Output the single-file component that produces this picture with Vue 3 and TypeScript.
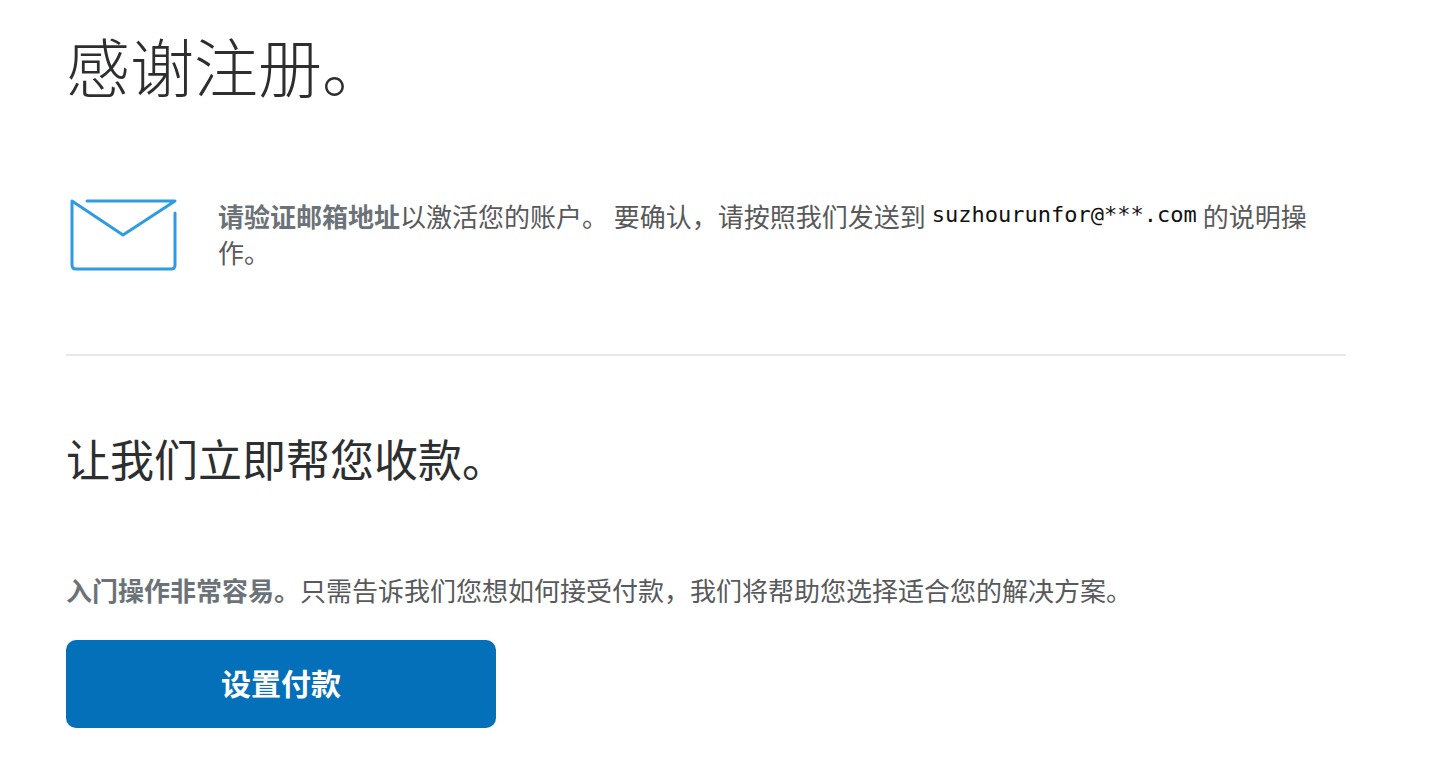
<script setup lang="ts">
const email: string = 'suzhourunfor@***.com'
</script>

<template>
  <main class="page">
    <h1 class="title">感谢注册。</h1>
    <section class="verify">
      <svg class="envelope" viewBox="0 0 108 76" aria-hidden="true">
        <path d="M17 4H105L53 38L2 4V68Q2 72 6 72H101Q105 72 105 68V16" />
      </svg>
      <p class="copy">
        <strong>请验证邮箱地址</strong>以激活您的账户。 要确认，请按照我们发送到<span class="email">{{ email }}</span>的说明操作。
      </p>
    </section>
    <section class="setup">
      <h2 class="subtitle">让我们立即帮您收款。</h2>
      <p class="copy"><strong>入门操作非常容易。</strong>只需告诉我们您想如何接受付款，我们将帮助您选择适合您的解决方案。</p>
      <button class="action" type="button">设置付款</button>
    </section>
  </main>
</template>

<style>
body {
  background: #fff;
}
</style>

<style scoped>
.page {
  box-sizing: border-box;
  padding: 16px 84px 56px 66px;
  font-family: "Noto Sans CJK SC", sans-serif;
  color: #2c2e2f;
}
.title {
  margin: 0;
  font-size: 64px;
  line-height: 96px;
  font-weight: 300;
}
.verify {
  display: flex;
  align-items: flex-start;
  gap: 40px;
  padding: 85px 0 81px;
  border-bottom: 2px solid #e6e6e6;
}
.envelope {
  flex: none;
  width: 108px;
  margin-left: 4px;
  fill: none;
  stroke: #2f9be3;
  stroke-width: 3;
  stroke-linecap: round;
  stroke-linejoin: round;
}
.copy {
  margin: 0;
  font-size: 26px;
  line-height: 36px;
  color: #58595b;
}
.copy strong {
  font-weight: 700;
  color: #6c7378;
}
.email {
  margin: 0 6px;
  font-family: "DejaVu Sans Mono", monospace;
  font-size: 22px;
  vertical-align: text-top;
  color: #111;
}
.subtitle {
  margin: 69px 0 81px;
  font-size: 44px;
  line-height: 66px;
  font-weight: 400;
}
.action {
  width: 430px;
  max-width: 100%;
  height: 88px;
  margin-top: 32px;
  padding: 0 16px 4px;
  border: 0;
  border-radius: 10px;
  background: #0570ba;
  color: #fff;
  font-family: inherit;
  font-size: 30px;
  font-weight: 700;
}
</style>
